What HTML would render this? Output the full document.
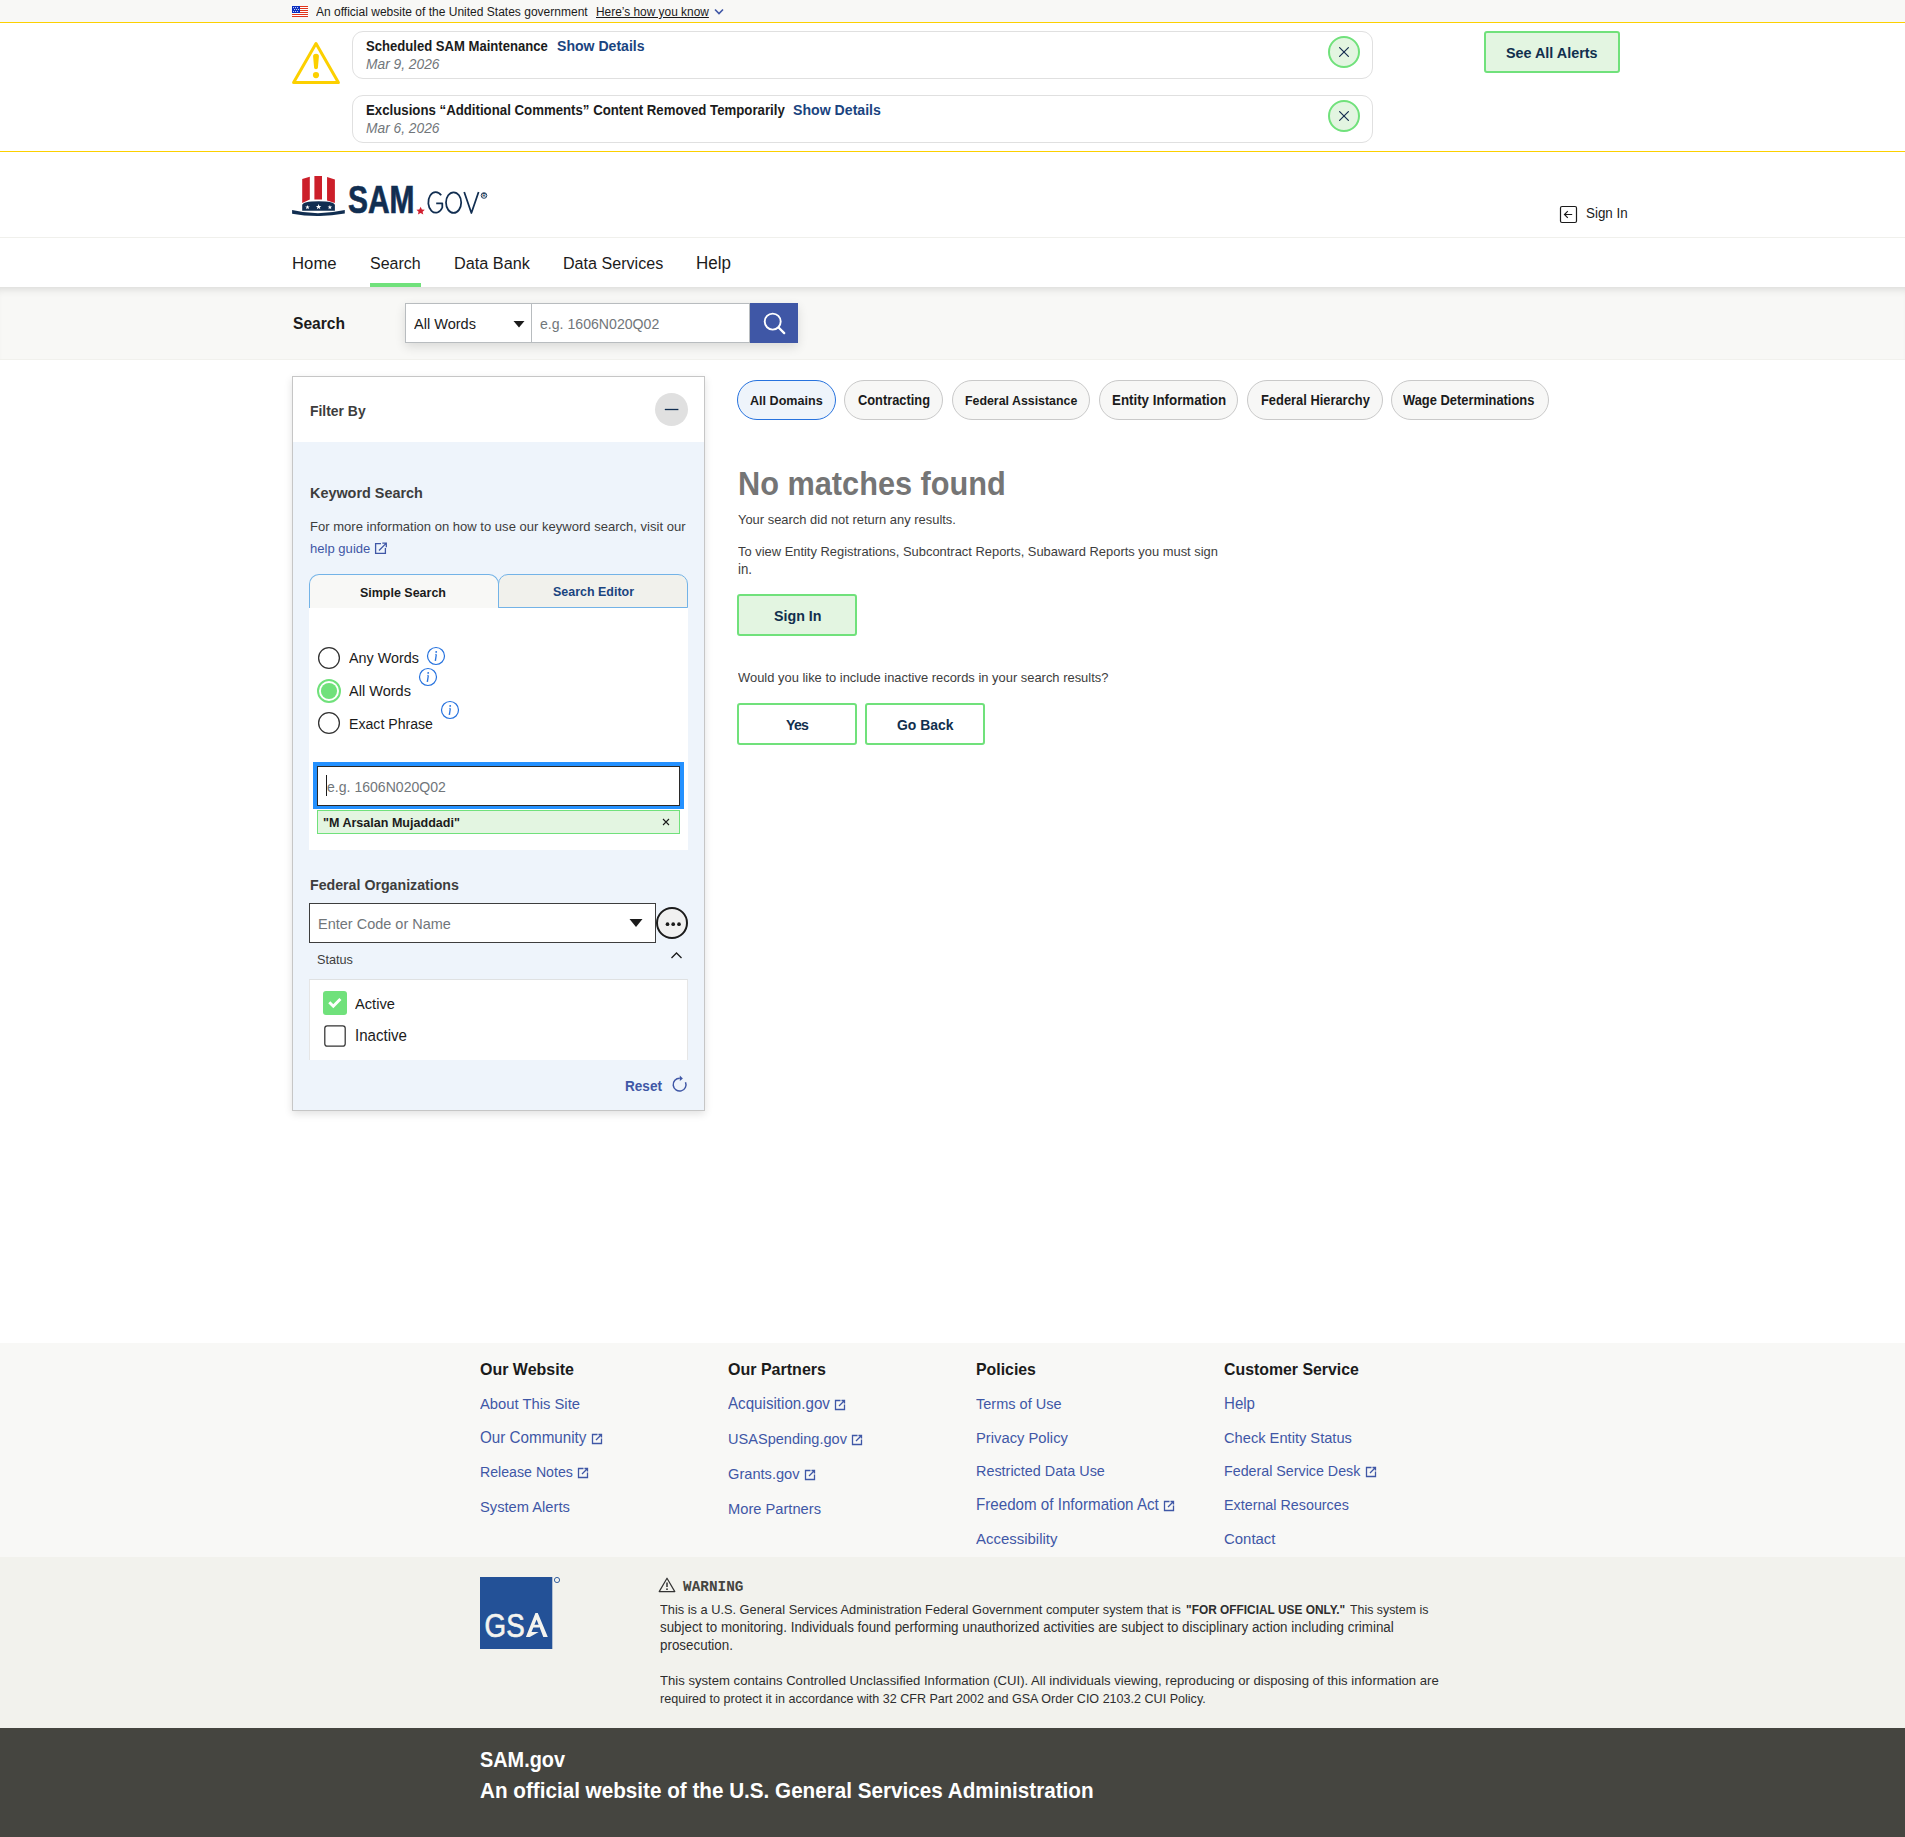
<!DOCTYPE html>
<html><head><meta charset="utf-8"><title>SAM.gov Search</title>
<style>
html,body{margin:0;padding:0;}
body{width:1905px;height:1837px;position:relative;overflow:hidden;background:#fff;font-family:"Liberation Sans",sans-serif;}
</style></head><body>
<div style="position:absolute;left:0px;top:0px;width:1905px;height:22px;background:#f8f8f6"></div>
<div style="position:absolute;left:0px;top:22px;width:1905px;height:1px;background:#fcd000"></div>
<svg style="position:absolute;left:292px;top:6px;" width="16" height="11" viewBox="0 0 16 11"><rect width="16" height="11" fill="#fff"/>
<g fill="#e0351b"><rect y="0" width="16" height="1"/><rect y="2" width="16" height="1"/><rect y="4" width="16" height="1"/><rect y="6" width="16" height="1"/><rect y="8" width="16" height="1"/><rect y="10" width="16" height="1"/></g>
<rect width="8" height="7" fill="#0a2ec0"/>
<g fill="#fff"><circle cx="1.6" cy="1.6" r=".55"/><circle cx="3.6" cy="1.6" r=".55"/><circle cx="5.6" cy="1.6" r=".55"/><circle cx="2.6" cy="3.5" r=".55"/><circle cx="4.6" cy="3.5" r=".55"/><circle cx="6.6" cy="3.5" r=".55"/><circle cx="1.6" cy="5.5" r=".55"/><circle cx="3.6" cy="5.5" r=".55"/><circle cx="5.6" cy="5.5" r=".55"/></g></svg>
<svg style="position:absolute;left:714px;top:8px;" width="10" height="7" viewBox="0 0 10 7"><path d="M1 1.5 L5 5.5 L9 1.5" fill="none" stroke="#3f57a6" stroke-width="1.6"/></svg>
<div style="position:absolute;left:0px;top:151px;width:1905px;height:1px;background:#fcd000"></div>
<svg style="position:absolute;left:291px;top:41px;" width="50" height="44" viewBox="0 0 50 44"><path d="M25 2.6 L47.4 41.6 L2.6 41.6 Z" fill="none" stroke="#fcd000" stroke-width="3" stroke-linejoin="round"/><path d="M22.1 15.6 Q22 12.8 25 12.8 Q28 12.8 27.9 15.6 L26.9 26.8 Q26.8 28.2 25 28.2 Q23.2 28.2 23.1 26.8 Z" fill="#fcd000"/><circle cx="25" cy="34.1" r="3.1" fill="#fcd000"/></svg>
<div style="position:absolute;left:352px;top:31px;width:1021px;height:48px;box-sizing:border-box;border:1px solid #e0e0e0;border-radius:11px;background:#fff"></div>
<svg style="position:absolute;left:1328px;top:36px;" width="32" height="32" viewBox="0 0 32 32"><circle cx="16" cy="16" r="15" fill="#e3f5e1" stroke="#70e17b" stroke-width="2"/><path d="M11.6 11.6 L20.4 20.4 M20.4 11.6 L11.6 20.4" stroke="#162e51" stroke-width="1.2" stroke-linecap="round"/></svg>
<div style="position:absolute;left:352px;top:95px;width:1021px;height:48px;box-sizing:border-box;border:1px solid #e0e0e0;border-radius:11px;background:#fff"></div>
<svg style="position:absolute;left:1328px;top:100px;" width="32" height="32" viewBox="0 0 32 32"><circle cx="16" cy="16" r="15" fill="#e3f5e1" stroke="#70e17b" stroke-width="2"/><path d="M11.6 11.6 L20.4 20.4 M20.4 11.6 L11.6 20.4" stroke="#162e51" stroke-width="1.2" stroke-linecap="round"/></svg>
<div style="position:absolute;left:1484px;top:31px;width:136px;height:42px;box-sizing:border-box;border:2px solid #70e17b;border-radius:3px;background:#e3f5e1"></div>
<svg style="position:absolute;left:290px;top:174px;" width="200" height="44" viewBox="0 0 200 44">
<path d="M12.2 5.1 L19.8 2.8 L19.8 25.6 L12.2 28.9 Z" fill="#cc1f2a"/>
<path d="M24.4 2 L32 2 L32 25.6 Q28.2 25.3 24.4 25.6 Z" fill="#cc1f2a"/>
<path d="M37.05 3 L44.9 5.4 L44.9 28.9 L37.05 26.6 Z" fill="#cc1f2a"/>
<path d="M12.2 31.1 Q12.6 27.2 28.6 27.2 Q44.6 27.2 44.9 31.1 L44.9 36.7 L12.2 36.7 Z" fill="#112e51"/>
<g fill="#fff"><polygon points="17.50,30.90 18.09,32.48 19.78,32.56 18.46,33.61 18.91,35.24 17.50,34.31 16.09,35.24 16.54,33.61 15.22,32.56 16.91,32.48"/><polygon points="28.60,30.00 29.32,31.91 31.36,32.00 29.76,33.28 30.30,35.25 28.60,34.12 26.90,35.25 27.44,33.28 25.84,32.00 27.88,31.91"/><polygon points="39.90,30.90 40.49,32.48 42.18,32.56 40.86,33.61 41.31,35.24 39.90,34.31 38.49,35.24 38.94,33.61 37.62,32.56 39.31,32.48"/></g>
<path d="M2.1 35.9 Q14 38.8 28 39.3 Q42 38.8 54.8 36 L54.8 39.6 Q40 42.3 27.3 42 Q14 42 2.1 39.8 Z" fill="#112e51"/>
<path d="M130.6 32.8 l1.3 2.7 2.9.3-2.2 1.9.7 2.9-2.7-1.6-2.7 1.6.7-2.9-2.2-1.9 2.9-.3z" fill="#d11f2f"/>
</svg>
<svg style="position:absolute;left:340px;top:180px;" width="160" height="40" viewBox="0 0 160 40"><text x="8" y="33" font-family="Liberation Sans" font-weight="700" font-size="38.4" fill="#112e51" stroke="#112e51" stroke-width="0.7" textLength="66.5" lengthAdjust="spacingAndGlyphs">SAM</text>
<g fill="none" stroke="#112e51" stroke-width="1.75" stroke-linejoin="round">
<path d="M101.2 15.2 A7.5 10.35 0 1 0 102.3 27.5 L102.3 23.4 L96.2 23.4"/>
<ellipse cx="113.6" cy="22.6" rx="7.6" ry="10.3"/>
<path d="M124.2 12 L131.4 33 L138.6 12"/>
</g>
<circle cx="144" cy="15.5" r="2.8" fill="none" stroke="#112e51" stroke-width="0.9"/><text x="144" y="17.2" text-anchor="middle" font-family="Liberation Sans" font-size="4.8" font-weight="700" fill="#112e51">R</text>
</svg>
<svg style="position:absolute;left:1559px;top:205px;" width="19" height="19" viewBox="0 0 19 19"><rect x="1.5" y="1.5" width="16" height="16" rx="1.5" fill="none" stroke="#1b1b1b" stroke-width="1.2"/><path d="M13.2 9.5 H5.5 M8.8 6.2 L5.5 9.5 L8.8 12.8" fill="none" stroke="#1b1b1b" stroke-width="1.2"/></svg>
<div style="position:absolute;left:0px;top:237px;width:1905px;height:1px;background:#f0f0ec"></div>
<div style="position:absolute;left:370px;top:283px;width:51px;height:4px;background:#70e17b"></div>
<div style="position:absolute;left:0px;top:287px;width:1905px;height:72px;background:#f8f8f6;box-shadow:inset 0 8px 8px -6px rgba(0,0,0,.13)"></div>
<div style="position:absolute;left:0px;top:359px;width:1905px;height:1px;background:#f1f1ed"></div>
<div style="position:absolute;left:405px;top:303px;width:393px;height:40px;box-shadow:0 4px 10px rgba(0,0,0,.12)"></div>
<div style="position:absolute;left:405px;top:303px;width:127px;height:40px;box-sizing:border-box;border:1px solid #b8bcbf;background:#fff"></div>
<div style="position:absolute;left:531px;top:303px;width:219px;height:40px;box-sizing:border-box;border:1px solid #b8bcbf;background:#fff"></div>
<div style="position:absolute;left:750px;top:303px;width:48px;height:40px;background:#3f57a6"></div>
<svg style="position:absolute;left:513px;top:320px;" width="12" height="8" viewBox="0 0 12 8"><path d="M0.5 1 L11.5 1 L6 7.5 Z" fill="#1b1b1b"/></svg>
<svg style="position:absolute;left:760px;top:310px;" width="28" height="28" viewBox="0 0 28 28"><circle cx="12.7" cy="11.6" r="8" fill="none" stroke="#fff" stroke-width="1.9"/><path d="M18.6 17.5 L24.2 23.1" stroke="#fff" stroke-width="2.3" stroke-linecap="round"/></svg>
<div style="position:absolute;left:292px;top:376px;width:413px;height:735px;box-sizing:border-box;border:1px solid #c6c6c6;background:#eef4fb;box-shadow:0 3px 8px rgba(0,0,0,.12)"></div>
<div style="position:absolute;left:293px;top:377px;width:411px;height:65px;background:#fff"></div>
<svg style="position:absolute;left:654px;top:392px;" width="35" height="35" viewBox="0 0 35 35"><circle cx="17.5" cy="17.5" r="16.5" fill="#e0e0e0"/><path d="M10.8 17.5 H24.4" stroke="#112e51" stroke-width="1.3"/></svg>
<svg style="position:absolute;left:374px;top:542px;" width="14" height="14" viewBox="0 0 14 14"><path d="M7 1.6 H1.6 V11.4 H11.4 V6" fill="none" stroke="#3f57a6" stroke-width="1.3"/><path d="M8.3 1.2 H12.3 V5.2 M12.1 1.4 L5 8.5" fill="none" stroke="#3f57a6" stroke-width="1.3"/></svg>
<div style="position:absolute;left:309px;top:574px;width:190px;height:34px;box-sizing:border-box;border:1px solid #73b3e7;border-bottom:none;border-radius:10px 10px 0 0;background:#f8f8f6"></div>
<div style="position:absolute;left:498px;top:574px;width:190px;height:34px;box-sizing:border-box;border:1px solid #73b3e7;border-bottom:1.5px solid #73b3e7;border-radius:10px 10px 0 0;background:#f1f1ec"></div>
<div style="position:absolute;left:309px;top:608px;width:379px;height:242px;background:#fff"></div>
<svg style="position:absolute;left:317px;top:645.7px;" width="24" height="24" viewBox="0 0 24 24"><circle cx="12" cy="12" r="10.4" fill="#fff" stroke="#333" stroke-width="1.3"/></svg>
<svg style="position:absolute;left:317px;top:710.7px;" width="24" height="24" viewBox="0 0 24 24"><circle cx="12" cy="12" r="10.4" fill="#fff" stroke="#333" stroke-width="1.3"/></svg>
<svg style="position:absolute;left:317px;top:678.9px;" width="24" height="24" viewBox="0 0 24 24"><circle cx="12" cy="12" r="11" fill="#fff" stroke="#70e17b" stroke-width="2"/><circle cx="12" cy="12" r="8.1" fill="#70e17b"/></svg>
<svg style="position:absolute;left:426px;top:646.2px;" width="20" height="20" viewBox="0 0 20 20"><circle cx="10" cy="10" r="8.5" fill="none" stroke="#2672de" stroke-width="1.2"/><circle cx="10.2" cy="5.9" r="0.95" fill="#2672de"/><path d="M10.3 8.5 L9.5 14.2 M9.4 8.7 L10.4 8.5 M8.7 14.4 L10.1 14.1" fill="none" stroke="#2672de" stroke-width="1.3"/></svg>
<svg style="position:absolute;left:418px;top:667.4px;" width="20" height="20" viewBox="0 0 20 20"><circle cx="10" cy="10" r="8.5" fill="none" stroke="#2672de" stroke-width="1.2"/><circle cx="10.2" cy="5.9" r="0.95" fill="#2672de"/><path d="M10.3 8.5 L9.5 14.2 M9.4 8.7 L10.4 8.5 M8.7 14.4 L10.1 14.1" fill="none" stroke="#2672de" stroke-width="1.3"/></svg>
<svg style="position:absolute;left:440px;top:700px;" width="20" height="20" viewBox="0 0 20 20"><circle cx="10" cy="10" r="8.5" fill="none" stroke="#2672de" stroke-width="1.2"/><circle cx="10.2" cy="5.9" r="0.95" fill="#2672de"/><path d="M10.3 8.5 L9.5 14.2 M9.4 8.7 L10.4 8.5 M8.7 14.4 L10.1 14.1" fill="none" stroke="#2672de" stroke-width="1.3"/></svg>
<div style="position:absolute;left:313px;top:762px;width:371px;height:47px;background:#2491ff"></div>
<div style="position:absolute;left:317px;top:766px;width:363px;height:40px;box-sizing:border-box;border:1.5px solid #2a2a2a;background:#fff"></div>
<div style="position:absolute;left:326px;top:775px;width:1px;height:21px;background:#1b1b1b"></div>
<div style="position:absolute;left:317px;top:810px;width:363px;height:24px;box-sizing:border-box;border:1px solid #70e17b;background:#e3f5e1"></div>
<svg style="position:absolute;left:661px;top:817px;" width="10" height="10" viewBox="0 0 10 10"><path d="M2 2 L8 8 M8 2 L2 8" stroke="#1b1b1b" stroke-width="1.1"/></svg>
<div style="position:absolute;left:309px;top:903px;width:347px;height:40px;box-sizing:border-box;border:1.5px solid #3d3d3d;background:#fff"></div>
<svg style="position:absolute;left:629px;top:918px;" width="14" height="10" viewBox="0 0 14 10"><path d="M0.5 1 L13.5 1 L7 9 Z" fill="#1b1b1b"/></svg>
<svg style="position:absolute;left:656px;top:907px;" width="32" height="32" viewBox="0 0 32 32"><circle cx="16" cy="16" r="15" fill="#f0f0f0" stroke="#1b1b1b" stroke-width="2"/><circle cx="11.5" cy="17.2" r="1.85" fill="#1b1b1b"/><circle cx="17.2" cy="17.2" r="1.85" fill="#1b1b1b"/><circle cx="23" cy="17.2" r="1.85" fill="#1b1b1b"/></svg>
<svg style="position:absolute;left:670px;top:950px;" width="13" height="10" viewBox="0 0 13 10"><path d="M1.5 8 L6.5 3 L11.5 8" fill="none" stroke="#1b1b1b" stroke-width="1.3"/></svg>
<div style="position:absolute;left:309px;top:979px;width:379px;height:81px;box-sizing:border-box;border-top:1px solid #dfe1e2;border-left:1px solid #e6e6e6;border-right:1px solid #e6e6e6;background:#fff"></div>
<svg style="position:absolute;left:323px;top:991px;" width="24" height="24" viewBox="0 0 24 24"><rect x="0" y="0" width="24" height="24" rx="3" fill="#70e17b"/><path d="M6.3 11.3 L10.3 15.2 L17.4 8" fill="none" stroke="#fff" stroke-width="3"/></svg>
<svg style="position:absolute;left:323px;top:1024px;" width="24" height="24" viewBox="0 0 24 24"><rect x="1.8" y="1.8" width="20.4" height="20.4" rx="2.5" fill="#fff" stroke="#333" stroke-width="1.25"/></svg>
<svg style="position:absolute;left:671px;top:1074px;" width="18" height="19" viewBox="0 0 18 19"><path d="M14.5 8.2 A6.4 6.4 0 1 1 8.8 4.3" fill="none" stroke="#3f57a6" stroke-width="1.5"/><path d="M8.8 1.6 L11.9 4.4 L8.8 7.1 Z" fill="#3f57a6"/></svg>
<div style="position:absolute;left:737px;top:380px;width:99px;height:40px;box-sizing:border-box;border:1.5px solid #2672de;border-radius:20px;background:#eef4fb"></div>
<div style="position:absolute;left:844px;top:380px;width:99px;height:40px;box-sizing:border-box;border:1px solid #c9c9c9;border-radius:20px;background:#f7f7f6"></div>
<div style="position:absolute;left:951.5px;top:380px;width:138.9000000000001px;height:40px;box-sizing:border-box;border:1px solid #c9c9c9;border-radius:20px;background:#f7f7f6"></div>
<div style="position:absolute;left:1099.2px;top:380px;width:139.29999999999995px;height:40px;box-sizing:border-box;border:1px solid #c9c9c9;border-radius:20px;background:#f7f7f6"></div>
<div style="position:absolute;left:1247.3px;top:380px;width:135.4000000000001px;height:40px;box-sizing:border-box;border:1px solid #c9c9c9;border-radius:20px;background:#f7f7f6"></div>
<div style="position:absolute;left:1391px;top:380px;width:158px;height:40px;box-sizing:border-box;border:1px solid #c9c9c9;border-radius:20px;background:#f7f7f6"></div>
<div style="position:absolute;left:737px;top:594px;width:120px;height:42px;box-sizing:border-box;border:2px solid #70e17b;border-radius:3px;background:#e3f5e1"></div>
<div style="position:absolute;left:737px;top:703px;width:120px;height:42px;box-sizing:border-box;border:2px solid #70e17b;border-radius:3px;background:#fff"></div>
<div style="position:absolute;left:865px;top:703px;width:120px;height:42px;box-sizing:border-box;border:2px solid #70e17b;border-radius:3px;background:#fff"></div>
<div style="position:absolute;left:0px;top:1343px;width:1905px;height:214px;background:#f8f8f6"></div>
<svg style="position:absolute;left:590.5px;top:1432.9px;" width="12" height="12" viewBox="0 0 12 12"><path d="M6.5 1.5 H1.5 V10.5 H10.5 V5.5" fill="none" stroke="#3f57a6" stroke-width="1.3"/><path d="M7.5 1.5 H10.5 V4.5 M10.5 1.5 L5 7" fill="none" stroke="#3f57a6" stroke-width="1.3"/></svg>
<svg style="position:absolute;left:577px;top:1467px;" width="12" height="12" viewBox="0 0 12 12"><path d="M6.5 1.5 H1.5 V10.5 H10.5 V5.5" fill="none" stroke="#3f57a6" stroke-width="1.3"/><path d="M7.5 1.5 H10.5 V4.5 M10.5 1.5 L5 7" fill="none" stroke="#3f57a6" stroke-width="1.3"/></svg>
<svg style="position:absolute;left:834.2px;top:1398.7px;" width="12" height="12" viewBox="0 0 12 12"><path d="M6.5 1.5 H1.5 V10.5 H10.5 V5.5" fill="none" stroke="#3f57a6" stroke-width="1.3"/><path d="M7.5 1.5 H10.5 V4.5 M10.5 1.5 L5 7" fill="none" stroke="#3f57a6" stroke-width="1.3"/></svg>
<svg style="position:absolute;left:851.2px;top:1433.9px;" width="12" height="12" viewBox="0 0 12 12"><path d="M6.5 1.5 H1.5 V10.5 H10.5 V5.5" fill="none" stroke="#3f57a6" stroke-width="1.3"/><path d="M7.5 1.5 H10.5 V4.5 M10.5 1.5 L5 7" fill="none" stroke="#3f57a6" stroke-width="1.3"/></svg>
<svg style="position:absolute;left:803.8000000000001px;top:1468.6px;" width="12" height="12" viewBox="0 0 12 12"><path d="M6.5 1.5 H1.5 V10.5 H10.5 V5.5" fill="none" stroke="#3f57a6" stroke-width="1.3"/><path d="M7.5 1.5 H10.5 V4.5 M10.5 1.5 L5 7" fill="none" stroke="#3f57a6" stroke-width="1.3"/></svg>
<svg style="position:absolute;left:1163px;top:1499.5px;" width="12" height="12" viewBox="0 0 12 12"><path d="M6.5 1.5 H1.5 V10.5 H10.5 V5.5" fill="none" stroke="#3f57a6" stroke-width="1.3"/><path d="M7.5 1.5 H10.5 V4.5 M10.5 1.5 L5 7" fill="none" stroke="#3f57a6" stroke-width="1.3"/></svg>
<svg style="position:absolute;left:1364.8px;top:1465.9px;" width="12" height="12" viewBox="0 0 12 12"><path d="M6.5 1.5 H1.5 V10.5 H10.5 V5.5" fill="none" stroke="#3f57a6" stroke-width="1.3"/><path d="M7.5 1.5 H10.5 V4.5 M10.5 1.5 L5 7" fill="none" stroke="#3f57a6" stroke-width="1.3"/></svg>
<div style="position:absolute;left:0px;top:1557px;width:1905px;height:171px;background:#f2f2ed"></div>
<svg style="position:absolute;left:480px;top:1577px;" width="82" height="73" viewBox="0 0 82 73"><rect x="0" y="0" width="72.3" height="72" fill="#235197"/><text x="4.6" y="60.2" font-family="Liberation Sans" font-size="34" fill="#f4f4ef" stroke="#f4f4ef" stroke-width="0.7" textLength="40" lengthAdjust="spacingAndGlyphs">GS</text><path d="M55.4 36 L57.8 36 L67.8 60 L63.3 60 L56.6 42.5 L51.5 55 L58.7 54.9 L49.8 60 L45.9 60 Z" fill="#f4f4ef"/><path d="M51.2 47.8 L62.2 47.8 L59.2 50.5 L52.5 50.5 Z" fill="#f4f4ef"/><circle cx="77" cy="3" r="2.6" fill="none" stroke="#235197" stroke-width=".9"/></svg>
<svg style="position:absolute;left:658px;top:1577px;" width="18" height="16" viewBox="0 0 18 16"><path d="M9 1.2 L16.8 14.6 H1.2 Z" fill="none" stroke="#333" stroke-width="1.2" stroke-linejoin="round"/><path d="M9 5.6 V10" stroke="#333" stroke-width="1.5"/><circle cx="9" cy="12.2" r=".9" fill="#333"/></svg>
<div style="position:absolute;left:0px;top:1728px;width:1905px;height:109px;background:#454540"></div>
<div style="position:absolute;left:316px;top:6.00px;font-family:'Liberation Sans';font-size:12.454px;line-height:1;font-weight:400;font-style:normal;color:#1b1b1b;white-space:pre;transform:scaleX(0.9662);transform-origin:0 0;">An official website of the United States government</div>
<div style="position:absolute;left:596px;top:6.00px;font-family:'Liberation Sans';font-size:12.329px;line-height:1;font-weight:400;font-style:normal;color:#1b1b1b;white-space:pre;text-decoration:underline;text-underline-offset:1px;transform:scaleX(0.9662);transform-origin:0 0;">Here’s how you know</div>
<div style="position:absolute;left:365.5px;top:39.00px;font-family:'Liberation Sans';font-size:14.018px;line-height:1;font-weight:700;font-style:normal;color:#1b1b1b;white-space:pre;transform:scaleX(0.9346);transform-origin:0 0;">Scheduled SAM Maintenance</div>
<div style="position:absolute;left:556.7px;top:38.00px;font-family:'Liberation Sans';font-size:15.060px;line-height:1;font-weight:700;font-style:normal;color:#1a4480;white-space:pre;transform:scaleX(0.9346);transform-origin:0 0;">Show Details</div>
<div style="position:absolute;left:365.5px;top:57.00px;font-family:'Liberation Sans';font-size:14.255px;line-height:1;font-weight:400;font-style:italic;color:#71767a;white-space:pre;transform:scaleX(0.9662);transform-origin:0 0;">Mar 9, 2026</div>
<div style="position:absolute;left:365.5px;top:103.00px;font-family:'Liberation Sans';font-size:14.164px;line-height:1;font-weight:700;font-style:normal;color:#1b1b1b;white-space:pre;transform:scaleX(0.9346);transform-origin:0 0;">Exclusions “Additional Comments” Content Removed Temporarily</div>
<div style="position:absolute;left:793px;top:102.00px;font-family:'Liberation Sans';font-size:15.129px;line-height:1;font-weight:700;font-style:normal;color:#1a4480;white-space:pre;transform:scaleX(0.9346);transform-origin:0 0;">Show Details</div>
<div style="position:absolute;left:365.5px;top:121.00px;font-family:'Liberation Sans';font-size:14.255px;line-height:1;font-weight:400;font-style:italic;color:#71767a;white-space:pre;transform:scaleX(0.9662);transform-origin:0 0;">Mar 6, 2026</div>
<div style="position:absolute;left:1506.4px;top:45.00px;font-family:'Liberation Sans';font-size:15.362px;line-height:1;font-weight:700;font-style:normal;color:#112f4e;white-space:pre;transform:scaleX(0.9346);transform-origin:0 0;">See All Alerts</div>
<div style="position:absolute;left:1586px;top:207.00px;font-family:'Liberation Sans';font-size:13.830px;line-height:1;font-weight:400;font-style:normal;color:#1b1b1b;white-space:pre;transform:scaleX(0.9662);transform-origin:0 0;">Sign In</div>
<div style="position:absolute;left:292.2px;top:255.20px;font-family:'Liberation Sans';font-size:17.344px;line-height:1;font-weight:400;font-style:normal;color:#1b1b1b;white-space:pre;transform:scaleX(0.9662);transform-origin:0 0;">Home</div>
<div style="position:absolute;left:370px;top:256.20px;font-family:'Liberation Sans';font-size:16.561px;line-height:1;font-weight:400;font-style:normal;color:#1b1b1b;white-space:pre;transform:scaleX(0.9662);transform-origin:0 0;">Search</div>
<div style="position:absolute;left:454px;top:256.20px;font-family:'Liberation Sans';font-size:16.845px;line-height:1;font-weight:400;font-style:normal;color:#1b1b1b;white-space:pre;transform:scaleX(0.9662);transform-origin:0 0;">Data Bank</div>
<div style="position:absolute;left:562.7px;top:256.20px;font-family:'Liberation Sans';font-size:16.661px;line-height:1;font-weight:400;font-style:normal;color:#1b1b1b;white-space:pre;transform:scaleX(0.9662);transform-origin:0 0;">Data Services</div>
<div style="position:absolute;left:695.5px;top:255.20px;font-family:'Liberation Sans';font-size:17.613px;line-height:1;font-weight:400;font-style:normal;color:#1b1b1b;white-space:pre;transform:scaleX(0.9662);transform-origin:0 0;">Help</div>
<div style="position:absolute;left:292.6px;top:316.00px;font-family:'Liberation Sans';font-size:16.681px;line-height:1;font-weight:700;font-style:normal;color:#1b1b1b;white-space:pre;transform:scaleX(0.9346);transform-origin:0 0;">Search</div>
<div style="position:absolute;left:414.1px;top:316.00px;font-family:'Liberation Sans';font-size:15.062px;line-height:1;font-weight:400;font-style:normal;color:#1b1b1b;white-space:pre;transform:scaleX(0.9662);transform-origin:0 0;">All Words</div>
<div style="position:absolute;left:540.3px;top:317.00px;font-family:'Liberation Sans';font-size:14.610px;line-height:1;font-weight:400;font-style:normal;color:#71767a;white-space:pre;transform:scaleX(0.9662);transform-origin:0 0;">e.g. 1606N020Q02</div>
<div style="position:absolute;left:309.6px;top:404.00px;font-family:'Liberation Sans';font-size:14.896px;line-height:1;font-weight:700;font-style:normal;color:#3d3d3d;white-space:pre;transform:scaleX(0.9346);transform-origin:0 0;">Filter By</div>
<div style="position:absolute;left:309.6px;top:485.00px;font-family:'Liberation Sans';font-size:15.429px;line-height:1;font-weight:700;font-style:normal;color:#3d3d3d;white-space:pre;transform:scaleX(0.9346);transform-origin:0 0;">Keyword Search</div>
<div style="position:absolute;left:309.6px;top:520.00px;font-family:'Liberation Sans';font-size:13.517px;line-height:1;font-weight:400;font-style:normal;color:#3d3d3d;white-space:pre;transform:scaleX(0.9662);transform-origin:0 0;">For more information on how to use our keyword search, visit our</div>
<div style="position:absolute;left:309.6px;top:542.00px;font-family:'Liberation Sans';font-size:13.545px;line-height:1;font-weight:400;font-style:normal;color:#3f57a6;white-space:pre;transform:scaleX(0.9662);transform-origin:0 0;">help guide</div>
<div style="position:absolute;left:360px;top:586.00px;font-family:'Liberation Sans';font-size:13.351px;line-height:1;font-weight:700;font-style:normal;color:#1b1b1b;white-space:pre;transform:scaleX(0.9346);transform-origin:0 0;">Simple Search</div>
<div style="position:absolute;left:552.5px;top:585.00px;font-family:'Liberation Sans';font-size:13.330px;line-height:1;font-weight:700;font-style:normal;color:#1a4480;white-space:pre;transform:scaleX(0.9346);transform-origin:0 0;">Search Editor</div>
<div style="position:absolute;left:348.8px;top:651.00px;font-family:'Liberation Sans';font-size:14.870px;line-height:1;font-weight:400;font-style:normal;color:#1b1b1b;white-space:pre;transform:scaleX(0.9662);transform-origin:0 0;">Any Words</div>
<div style="position:absolute;left:348.8px;top:683.00px;font-family:'Liberation Sans';font-size:15.062px;line-height:1;font-weight:400;font-style:normal;color:#1b1b1b;white-space:pre;transform:scaleX(0.9662);transform-origin:0 0;">All Words</div>
<div style="position:absolute;left:349.3px;top:717.00px;font-family:'Liberation Sans';font-size:14.618px;line-height:1;font-weight:400;font-style:normal;color:#1b1b1b;white-space:pre;transform:scaleX(0.9662);transform-origin:0 0;">Exact Phrase</div>
<div style="position:absolute;left:326.5px;top:780.00px;font-family:'Liberation Sans';font-size:14.574px;line-height:1;font-weight:400;font-style:normal;color:#71767a;white-space:pre;transform:scaleX(0.9662);transform-origin:0 0;">e.g. 1606N020Q02</div>
<div style="position:absolute;left:323.4px;top:816.00px;font-family:'Liberation Sans';font-size:13.433px;line-height:1;font-weight:700;font-style:normal;color:#1b1b1b;white-space:pre;transform:scaleX(0.9346);transform-origin:0 0;">&quot;M Arsalan Mujaddadi&quot;</div>
<div style="position:absolute;left:309.6px;top:877.00px;font-family:'Liberation Sans';font-size:15.180px;line-height:1;font-weight:700;font-style:normal;color:#3d3d3d;white-space:pre;transform:scaleX(0.9346);transform-origin:0 0;">Federal Organizations</div>
<div style="position:absolute;left:318.1px;top:916.00px;font-family:'Liberation Sans';font-size:15.010px;line-height:1;font-weight:400;font-style:normal;color:#71767a;white-space:pre;transform:scaleX(0.9662);transform-origin:0 0;">Enter Code or Name</div>
<div style="position:absolute;left:317.4px;top:953.00px;font-family:'Liberation Sans';font-size:13.143px;line-height:1;font-weight:400;font-style:normal;color:#3d3d3d;white-space:pre;transform:scaleX(0.9662);transform-origin:0 0;">Status</div>
<div style="position:absolute;left:355px;top:996.00px;font-family:'Liberation Sans';font-size:15.202px;line-height:1;font-weight:400;font-style:normal;color:#1b1b1b;white-space:pre;transform:scaleX(0.9662);transform-origin:0 0;">Active</div>
<div style="position:absolute;left:355px;top:1028.30px;font-family:'Liberation Sans';font-size:15.616px;line-height:1;font-weight:400;font-style:normal;color:#1b1b1b;white-space:pre;transform:scaleX(0.9662);transform-origin:0 0;">Inactive</div>
<div style="position:absolute;left:625.3px;top:1079.00px;font-family:'Liberation Sans';font-size:14.535px;line-height:1;font-weight:700;font-style:normal;color:#3f57a6;white-space:pre;transform:scaleX(0.9346);transform-origin:0 0;">Reset</div>
<div style="position:absolute;left:750.3px;top:393.60px;font-family:'Liberation Sans';font-size:13.461px;line-height:1;font-weight:700;font-style:normal;color:#1b1b1b;white-space:pre;transform:scaleX(0.9346);transform-origin:0 0;">All Domains</div>
<div style="position:absolute;left:857.7px;top:393.60px;font-family:'Liberation Sans';font-size:13.749px;line-height:1;font-weight:700;font-style:normal;color:#1b1b1b;white-space:pre;transform:scaleX(0.9346);transform-origin:0 0;">Contracting</div>
<div style="position:absolute;left:964.7px;top:393.60px;font-family:'Liberation Sans';font-size:13.247px;line-height:1;font-weight:700;font-style:normal;color:#1b1b1b;white-space:pre;transform:scaleX(0.9346);transform-origin:0 0;">Federal Assistance</div>
<div style="position:absolute;left:1111.5px;top:392.60px;font-family:'Liberation Sans';font-size:14.283px;line-height:1;font-weight:700;font-style:normal;color:#1b1b1b;white-space:pre;transform:scaleX(0.9346);transform-origin:0 0;">Entity Information</div>
<div style="position:absolute;left:1260.6px;top:393.60px;font-family:'Liberation Sans';font-size:13.792px;line-height:1;font-weight:700;font-style:normal;color:#1b1b1b;white-space:pre;transform:scaleX(0.9346);transform-origin:0 0;">Federal Hierarchy</div>
<div style="position:absolute;left:1403.4px;top:393.60px;font-family:'Liberation Sans';font-size:13.802px;line-height:1;font-weight:700;font-style:normal;color:#1b1b1b;white-space:pre;transform:scaleX(0.9346);transform-origin:0 0;">Wage Determinations</div>
<div style="position:absolute;left:738px;top:468.00px;font-family:'Liberation Sans';font-size:32.875px;line-height:1;font-weight:700;font-style:normal;color:#757575;white-space:pre;transform:scaleX(0.9346);transform-origin:0 0;">No matches found</div>
<div style="position:absolute;left:737.6px;top:513.30px;font-family:'Liberation Sans';font-size:13.381px;line-height:1;font-weight:400;font-style:normal;color:#3d3d3d;white-space:pre;transform:scaleX(0.9662);transform-origin:0 0;">Your search did not return any results.</div>
<div style="position:absolute;left:737.6px;top:545.00px;font-family:'Liberation Sans';font-size:13.361px;line-height:1;font-weight:400;font-style:normal;color:#3d3d3d;white-space:pre;transform:scaleX(0.9662);transform-origin:0 0;">To view Entity Registrations, Subcontract Reports, Subaward Reports you must sign</div>
<div style="position:absolute;left:737.6px;top:562.70px;font-family:'Liberation Sans';font-size:13.718px;line-height:1;font-weight:400;font-style:normal;color:#3d3d3d;white-space:pre;transform:scaleX(0.9662);transform-origin:0 0;">in.</div>
<div style="position:absolute;left:773.8px;top:608.20px;font-family:'Liberation Sans';font-size:15.281px;line-height:1;font-weight:700;font-style:normal;color:#112f4e;white-space:pre;transform:scaleX(0.9346);transform-origin:0 0;">Sign In</div>
<div style="position:absolute;left:737.6px;top:670.70px;font-family:'Liberation Sans';font-size:13.397px;line-height:1;font-weight:400;font-style:normal;color:#3d3d3d;white-space:pre;transform:scaleX(0.9662);transform-origin:0 0;">Would you like to include inactive records in your search results?</div>
<div style="position:absolute;left:786.1px;top:717.80px;font-family:'Liberation Sans';font-size:14.100px;line-height:1;font-weight:700;font-style:normal;color:#112f4e;white-space:pre;letter-spacing:-0.770px;">Yes</div>
<div style="position:absolute;left:897.2px;top:717.80px;font-family:'Liberation Sans';font-size:14.901px;line-height:1;font-weight:700;font-style:normal;color:#112f4e;white-space:pre;transform:scaleX(0.9346);transform-origin:0 0;">Go Back</div>
<div style="position:absolute;left:480px;top:1361.00px;font-family:'Liberation Sans';font-size:17.130px;line-height:1;font-weight:700;font-style:normal;color:#1b1b1b;white-space:pre;transform:scaleX(0.9346);transform-origin:0 0;">Our Website</div>
<div style="position:absolute;left:728.2px;top:1361.00px;font-family:'Liberation Sans';font-size:17.153px;line-height:1;font-weight:700;font-style:normal;color:#1b1b1b;white-space:pre;transform:scaleX(0.9346);transform-origin:0 0;">Our Partners</div>
<div style="position:absolute;left:976px;top:1361.00px;font-family:'Liberation Sans';font-size:16.985px;line-height:1;font-weight:700;font-style:normal;color:#1b1b1b;white-space:pre;transform:scaleX(0.9346);transform-origin:0 0;">Policies</div>
<div style="position:absolute;left:1224.3px;top:1361.00px;font-family:'Liberation Sans';font-size:16.986px;line-height:1;font-weight:700;font-style:normal;color:#1b1b1b;white-space:pre;transform:scaleX(0.9346);transform-origin:0 0;">Customer Service</div>
<div style="position:absolute;left:480px;top:1395.70px;font-family:'Liberation Sans';font-size:15.303px;line-height:1;font-weight:400;font-style:normal;color:#3f57a6;white-space:pre;transform:scaleX(0.9662);transform-origin:0 0;">About This Site</div>
<div style="position:absolute;left:480px;top:1429.90px;font-family:'Liberation Sans';font-size:15.743px;line-height:1;font-weight:400;font-style:normal;color:#3f57a6;white-space:pre;transform:scaleX(0.9662);transform-origin:0 0;">Our Community</div>
<div style="position:absolute;left:480px;top:1465.00px;font-family:'Liberation Sans';font-size:14.675px;line-height:1;font-weight:400;font-style:normal;color:#3f57a6;white-space:pre;transform:scaleX(0.9662);transform-origin:0 0;">Release Notes</div>
<div style="position:absolute;left:480px;top:1499.00px;font-family:'Liberation Sans';font-size:15.238px;line-height:1;font-weight:400;font-style:normal;color:#3f57a6;white-space:pre;transform:scaleX(0.9662);transform-origin:0 0;">System Alerts</div>
<div style="position:absolute;left:728.2px;top:1395.70px;font-family:'Liberation Sans';font-size:15.696px;line-height:1;font-weight:400;font-style:normal;color:#3f57a6;white-space:pre;transform:scaleX(0.9662);transform-origin:0 0;">Acquisition.gov</div>
<div style="position:absolute;left:728.2px;top:1430.90px;font-family:'Liberation Sans';font-size:15.071px;line-height:1;font-weight:400;font-style:normal;color:#3f57a6;white-space:pre;transform:scaleX(0.9662);transform-origin:0 0;">USASpending.gov</div>
<div style="position:absolute;left:728.2px;top:1465.60px;font-family:'Liberation Sans';font-size:15.151px;line-height:1;font-weight:400;font-style:normal;color:#3f57a6;white-space:pre;transform:scaleX(0.9662);transform-origin:0 0;">Grants.gov</div>
<div style="position:absolute;left:728.2px;top:1500.70px;font-family:'Liberation Sans';font-size:15.193px;line-height:1;font-weight:400;font-style:normal;color:#3f57a6;white-space:pre;transform:scaleX(0.9662);transform-origin:0 0;">More Partners</div>
<div style="position:absolute;left:976px;top:1395.70px;font-family:'Liberation Sans';font-size:15.041px;line-height:1;font-weight:400;font-style:normal;color:#3f57a6;white-space:pre;transform:scaleX(0.9662);transform-origin:0 0;">Terms of Use</div>
<div style="position:absolute;left:976px;top:1429.90px;font-family:'Liberation Sans';font-size:15.299px;line-height:1;font-weight:400;font-style:normal;color:#3f57a6;white-space:pre;transform:scaleX(0.9662);transform-origin:0 0;">Privacy Policy</div>
<div style="position:absolute;left:976px;top:1463.90px;font-family:'Liberation Sans';font-size:14.922px;line-height:1;font-weight:400;font-style:normal;color:#3f57a6;white-space:pre;transform:scaleX(0.9662);transform-origin:0 0;">Restricted Data Use</div>
<div style="position:absolute;left:976px;top:1496.50px;font-family:'Liberation Sans';font-size:15.704px;line-height:1;font-weight:400;font-style:normal;color:#3f57a6;white-space:pre;transform:scaleX(0.9662);transform-origin:0 0;">Freedom of Information Act</div>
<div style="position:absolute;left:976px;top:1531.20px;font-family:'Liberation Sans';font-size:15.470px;line-height:1;font-weight:400;font-style:normal;color:#3f57a6;white-space:pre;transform:scaleX(0.9662);transform-origin:0 0;">Accessibility</div>
<div style="position:absolute;left:1224.3px;top:1395.70px;font-family:'Liberation Sans';font-size:15.600px;line-height:1;font-weight:400;font-style:normal;color:#3f57a6;white-space:pre;transform:scaleX(0.9662);transform-origin:0 0;">Help</div>
<div style="position:absolute;left:1224.3px;top:1429.90px;font-family:'Liberation Sans';font-size:15.182px;line-height:1;font-weight:400;font-style:normal;color:#3f57a6;white-space:pre;transform:scaleX(0.9662);transform-origin:0 0;">Check Entity Status</div>
<div style="position:absolute;left:1224.3px;top:1463.90px;font-family:'Liberation Sans';font-size:14.779px;line-height:1;font-weight:400;font-style:normal;color:#3f57a6;white-space:pre;transform:scaleX(0.9662);transform-origin:0 0;">Federal Service Desk</div>
<div style="position:absolute;left:1224.3px;top:1497.50px;font-family:'Liberation Sans';font-size:14.826px;line-height:1;font-weight:400;font-style:normal;color:#3f57a6;white-space:pre;transform:scaleX(0.9662);transform-origin:0 0;">External Resources</div>
<div style="position:absolute;left:1224.3px;top:1531.20px;font-family:'Liberation Sans';font-size:15.466px;line-height:1;font-weight:400;font-style:normal;color:#3f57a6;white-space:pre;transform:scaleX(0.9662);transform-origin:0 0;">Contact</div>
<div style="position:absolute;left:683.1px;top:1580.00px;font-family:'Liberation Mono';font-size:14.378px;line-height:1;font-weight:700;font-style:normal;color:#454540;white-space:pre;">WARNING</div>
<div style="position:absolute;left:659.5px;top:1603.00px;font-family:'Liberation Sans';font-size:13.244px;line-height:1;font-weight:400;font-style:normal;color:#2e2e2e;white-space:pre;transform:scaleX(0.9662);transform-origin:0 0;">This is a U.S. General Services Administration Federal Government computer system that is</div>
<div style="position:absolute;left:1186px;top:1604.00px;font-family:'Liberation Sans';font-size:12.726px;line-height:1;font-weight:700;font-style:normal;color:#2e2e2e;white-space:pre;transform:scaleX(0.9346);transform-origin:0 0;">&quot;FOR OFFICIAL USE ONLY.&quot;</div>
<div style="position:absolute;left:1349.9px;top:1604.00px;font-family:'Liberation Sans';font-size:12.811px;line-height:1;font-weight:400;font-style:normal;color:#2e2e2e;white-space:pre;transform:scaleX(0.9662);transform-origin:0 0;">This system is</div>
<div style="position:absolute;left:659.5px;top:1621.40px;font-family:'Liberation Sans';font-size:13.833px;line-height:1;font-weight:400;font-style:normal;color:#2e2e2e;white-space:pre;transform:scaleX(0.9662);transform-origin:0 0;">subject to monitoring. Individuals found performing unauthorized activities are subject to disciplinary action including criminal</div>
<div style="position:absolute;left:659.5px;top:1638.70px;font-family:'Liberation Sans';font-size:13.869px;line-height:1;font-weight:400;font-style:normal;color:#2e2e2e;white-space:pre;transform:scaleX(0.9662);transform-origin:0 0;">prosecution.</div>
<div style="position:absolute;left:659.5px;top:1674.40px;font-family:'Liberation Sans';font-size:13.591px;line-height:1;font-weight:400;font-style:normal;color:#2e2e2e;white-space:pre;transform:scaleX(0.9662);transform-origin:0 0;">This system contains Controlled Unclassified Information (CUI). All individuals viewing, reproducing or disposing of this information are</div>
<div style="position:absolute;left:659.5px;top:1692.30px;font-family:'Liberation Sans';font-size:13.007px;line-height:1;font-weight:400;font-style:normal;color:#2e2e2e;white-space:pre;transform:scaleX(0.9662);transform-origin:0 0;">required to protect it in accordance with 32 CFR Part 2002 and GSA Order CIO 2103.2 CUI Policy.</div>
<div style="position:absolute;left:480px;top:1749.80px;font-family:'Liberation Sans';font-size:21.260px;line-height:1;font-weight:700;font-style:normal;color:#fff;white-space:pre;transform:scaleX(0.9346);transform-origin:0 0;">SAM.gov</div>
<div style="position:absolute;left:480px;top:1780.30px;font-family:'Liberation Sans';font-size:22.126px;line-height:1;font-weight:700;font-style:normal;color:#fff;white-space:pre;transform:scaleX(0.9346);transform-origin:0 0;">An official website of the U.S. General Services Administration</div>
</body></html>
